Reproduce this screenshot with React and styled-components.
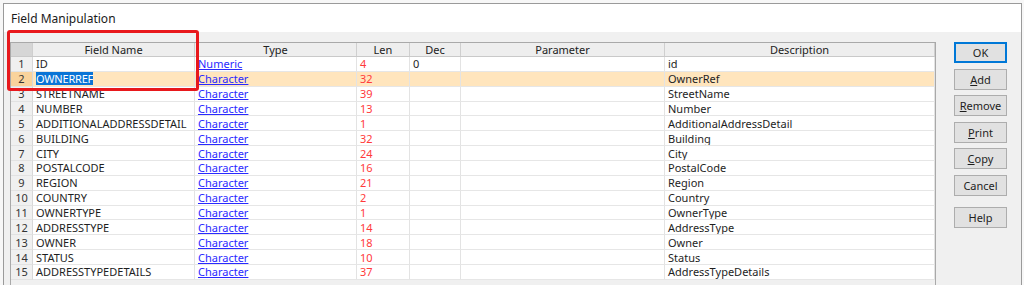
import React from 'react';
import styled, { createGlobalStyle } from 'styled-components';

const GlobalStyle = createGlobalStyle`
  html, body {
    margin: 0;
    padding: 0;
    background: #f7f7f7;
    overflow: hidden;
  }
  body {
    font-family: "Noto Sans", "Open Sans", sans-serif;
    font-size: 11px;
    color: #1e1e1e;
  }
`;

const fields = [
  ['ID', 'Numeric', '4', '0', 'id'],
  ['OWNERREF', 'Character', '32', '', 'OwnerRef'],
  ['STREETNAME', 'Character', '39', '', 'StreetName'],
  ['NUMBER', 'Character', '13', '', 'Number'],
  ['ADDITIONALADDRESSDETAIL', 'Character', '1', '', 'AdditionalAddressDetail'],
  ['BUILDING', 'Character', '32', '', 'Building'],
  ['CITY', 'Character', '24', '', 'City'],
  ['POSTALCODE', 'Character', '16', '', 'PostalCode'],
  ['REGION', 'Character', '21', '', 'Region'],
  ['COUNTRY', 'Character', '2', '', 'Country'],
  ['OWNERTYPE', 'Character', '1', '', 'OwnerType'],
  ['ADDRESSTYPE', 'Character', '14', '', 'AddressType'],
  ['OWNER', 'Character', '18', '', 'Owner'],
  ['STATUS', 'Character', '10', '', 'Status'],
  ['ADDRESSTYPEDETAILS', 'Character', '37', '', 'AddressTypeDetails'],
];

const COLS = '22px 162px 162px 53px 51px 204px 270px';

export default function App() {
  return (
    <>
      <GlobalStyle />
      <Page>
        <Dialog>
          <TitleBar>Field Manipulation</TitleBar>
          <Body>
            <GridBox>
              <HeaderRow>
                <HeadCell $corner />
                <HeadCell>Field Name</HeadCell>
                <HeadCell>Type</HeadCell>
                <HeadCell>Len</HeadCell>
                <HeadCell>Dec</HeadCell>
                <HeadCell>Parameter</HeadCell>
                <HeadCell>Description</HeadCell>
              </HeaderRow>
              {fields.map(([name, type, len, dec, desc], i) => {
                const current = i === 1;
                return (
                  <DataRow key={name}>
                    <NumCell $current={current}>{i + 1}</NumCell>
                    <Cell $current={current}>
                      {current ? <Selected>{name}</Selected> : name}
                    </Cell>
                    <Cell $current={current}>
                      <TypeLink>{type}</TypeLink>
                    </Cell>
                    <Cell $current={current} $red>{len}</Cell>
                    <Cell $current={current}>{dec}</Cell>
                    <Cell $current={current} />
                    <Cell $current={current}>{desc}</Cell>
                  </DataRow>
                );
              })}
            </GridBox>
            <ButtonColumn>
              <Button $default>OK</Button>
              <Button><u>A</u>dd</Button>
              <Button><u>R</u>emove</Button>
              <Button><u>P</u>rint</Button>
              <Button><u>C</u>opy</Button>
              <Button>Cancel</Button>
              <Button $spaced>Help</Button>
            </ButtonColumn>
          </Body>
        </Dialog>
        <Highlight />
      </Page>
    </>
  );
}

const Page = styled.div`
  position: relative;
  height: 285px;
  padding: 3px 2px 0 3px;
  box-sizing: border-box;
`;

const Dialog = styled.div`
  width: 1019px;
  height: 282px;
  box-sizing: border-box;
  border: 1px solid #9a9a9a;
  border-bottom: none;
  background: #f0f0f0;
  display: flex;
  flex-direction: column;
  overflow: hidden;
`;

const TitleBar = styled.div`
  height: 28px;
  flex: none;
  background: #ffffff;
  display: flex;
  align-items: center;
  padding-left: 7px;
  font-size: 12px;
  color: #1a1a1a;
`;

const Body = styled.div`
  flex: 1;
  display: flex;
  align-items: flex-start;
  padding: 10px 0 0 6px;
  background: #f0f0f0;
`;

const GridBox = styled.div`
  width: 926px;
  height: 260px;
  flex: none;
  box-sizing: border-box;
  border: 1px solid #a9a9a9;
  border-bottom: none;
  background: #f0f0f0;
`;

const HeaderRow = styled.div`
  display: grid;
  grid-template-columns: ${COLS};
  height: 14px;
  box-sizing: border-box;
  border-bottom: 1px solid #c9c9c9;
`;

const HeadCell = styled.div`
  display: flex;
  align-items: center;
  justify-content: center;
  border-right: 1px solid #cfcfcf;
  background: ${(p) => (p.$corner ? '#d6d6d6' : '#eeeeee')};
  color: #222;
  line-height: 1;
`;

const DataRow = styled.div`
  display: grid;
  grid-template-columns: ${COLS};
  height: 14.86px;
  box-sizing: border-box;
`;

const NumCell = styled.div`
  display: flex;
  align-items: center;
  justify-content: center;
  background: ${(p) => (p.$current ? '#f9d39c' : '#f0f0f0')};
  border-right: 1px solid #d8d8d8;
  border-bottom: 1px solid #e2e2e2;
  color: #333;
  line-height: 1;
`;

const Cell = styled.div`
  display: flex;
  align-items: center;
  padding-left: 3px;
  background: ${(p) => (p.$current ? '#ffe5bd' : '#ffffff')};
  border-right: 1px solid #e3e3e3;
  border-bottom: 1px solid #e6e6e6;
  color: ${(p) => (p.$red ? '#ff3a3a' : '#1e1e1e')};
  white-space: nowrap;
  overflow: hidden;
  line-height: 1;
`;

const Selected = styled.span`
  background: #0a74d6;
  color: #ffffff;
  padding: 1px 0;
  letter-spacing: -0.2px;
`;

const TypeLink = styled.span`
  color: #2a2aff;
  text-decoration: underline;
`;

const ButtonColumn = styled.div`
  display: flex;
  flex-direction: column;
  gap: 5.5px;
  margin-left: 18px;
`;

const Button = styled.button`
  width: 53px;
  height: 21px;
  padding: 0;
  box-sizing: border-box;
  font-family: "Noto Sans", "Open Sans", sans-serif;
  font-size: 11px;
  color: #1e1e1e;
  background: #e1e1e1;
  border: 1px solid ${(p) => (p.$default ? '#0078d7' : '#adadad')};
  box-shadow: ${(p) => (p.$default ? 'inset 0 0 0 1px #0078d7' : 'none')};
  margin-top: ${(p) => (p.$spaced ? '6px' : '0')};
  line-height: 1;
`;

const Highlight = styled.div`
  position: absolute;
  left: 7px;
  top: 30px;
  width: 192px;
  height: 61px;
  box-sizing: border-box;
  border: 3px solid #e8181c;
  border-radius: 3px;
  pointer-events: none;
`;
